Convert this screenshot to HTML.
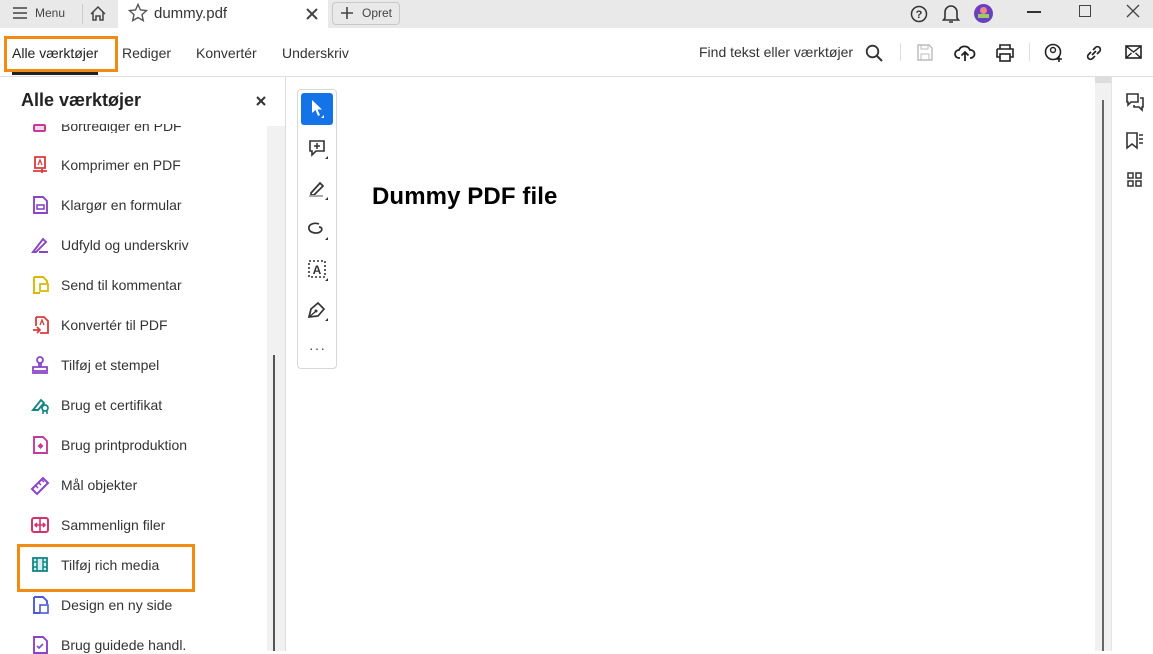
<!DOCTYPE html>
<html><head><meta charset="utf-8"><style>
*{margin:0;padding:0;box-sizing:border-box}
body{width:1153px;height:651px;overflow:hidden;background:#fff;font-family:"Liberation Sans",Arial,sans-serif;color:#2c2c2c;position:relative}
.a{position:absolute}
.tb{left:0;top:0;width:1153px;height:28px;background:#e9e9e9}
.t{font-size:14px;white-space:nowrap}
svg{position:absolute;overflow:visible}
.it{position:absolute;left:61px;font-size:14px;color:#333;white-space:nowrap}
</style></head><body>
<div class="a tb"></div>
<svg style="left:12px;top:6px" width="16" height="14"><path d="M1 2h14M1 7h14M1 12h14" stroke="#444" stroke-width="1.6"/></svg>
<div class="a t" style="left:35px;top:6px;font-size:12px;color:#444">Menu</div>
<div class="a" style="left:82px;top:4px;width:1px;height:20px;background:#ccc"></div>
<svg style="left:89px;top:5px" width="18" height="17"><path d="M2 9L9 2l7 7M4 7v8h3v-4h4v4h3V7" fill="none" stroke="#444" stroke-width="1.5"/></svg>
<div class="a" style="left:118px;top:0;width:210px;height:28px;background:#fff"></div>
<svg style="left:128px;top:3px" width="20" height="20"><path d="M10 1.5l2.5 5.5 6 .6-4.5 4 1.3 6L10 14.6 4.7 17.6 6 11.6 1.5 7.6l6-.6z" fill="none" stroke="#555" stroke-width="1.4"/></svg>
<div class="a t" style="left:154px;top:5px;font-size:15px;color:#333">dummy.pdf</div>
<svg style="left:306px;top:8px" width="12" height="12"><path d="M1 1l10 10M11 1L1 11" stroke="#444" stroke-width="2"/></svg>
<div class="a" style="left:332px;top:2px;width:68px;height:23px;border:1px solid #c8c8c8;border-radius:4px"></div>
<svg style="left:341px;top:7px" width="12" height="12"><path d="M6 0v12M0 6h12" stroke="#444" stroke-width="1.6"/></svg>
<div class="a t" style="left:362px;top:6px;font-size:12px;color:#444">Opret</div>
<svg style="left:910px;top:5px" width="18" height="18"><circle cx="9" cy="9" r="7.5" fill="none" stroke="#333" stroke-width="1.5"/><text x="9" y="13" font-size="11" text-anchor="middle" font-family="Liberation Sans" font-weight="bold" fill="#333">?</text></svg>
<svg style="left:942px;top:4px" width="18" height="20"><path d="M3 14V8a6 6 0 0 1 12 0v6l1.5 2H1.5zM7 18h4" fill="none" stroke="#333" stroke-width="1.6"/></svg>
<div class="a" style="left:974px;top:4px;width:19px;height:19px;border-radius:50%;background:#6a3fc0"></div>
<div class="a" style="left:980px;top:7px;width:7px;height:7px;border-radius:50%;background:#e88"></div>
<div class="a" style="left:978px;top:14px;width:11px;height:4px;background:#9c6"></div>
<div class="a" style="left:1027px;top:11px;width:14px;height:2px;background:#333"></div>
<div class="a" style="left:1079px;top:5px;width:12px;height:12px;border:1px solid #444"></div>
<svg style="left:1127px;top:5px" width="12" height="12"><path d="M0 0l12 12M12 0L0 12" stroke="#444" stroke-width="1.3"/></svg>
<div class="a t" style="left:12px;top:45px;color:#222">Alle værktøjer</div>
<div class="a" style="left:4px;top:36px;width:114px;height:36px;border:3px solid #f38a12"></div>
<div class="a" style="left:12px;top:72px;width:86px;height:3px;background:#222"></div>
<div class="a t" style="left:122px;top:45px;color:#333">Rediger</div>
<div class="a t" style="left:196px;top:45px;color:#333">Konvertér</div>
<div class="a t" style="left:282px;top:45px;color:#333">Underskriv</div>
<div class="a t" style="left:699px;top:44px;color:#333">Find tekst eller værktøjer</div>
<svg style="left:865px;top:44px" width="18" height="18"><circle cx="7.5" cy="7.5" r="5.8" fill="none" stroke="#333" stroke-width="1.8"/><path d="M12 12l5 5" stroke="#333" stroke-width="2"/></svg>
<div class="a" style="left:900px;top:43px;width:1px;height:18px;background:#ddd"></div>
<svg style="left:917px;top:44px" width="16" height="17"><path d="M1 1h11l3 3v12H1z" fill="none" stroke="#bbb" stroke-width="1.4"/><rect x="4" y="1" width="7" height="4" fill="none" stroke="#bbb"/><rect x="4" y="10" width="8" height="6" fill="none" stroke="#bbb"/></svg>
<svg style="left:955px;top:43px" width="20" height="20"><path d="M5 15H4a4 4 0 0 1 0-8 6 6 0 0 1 11 0 4 4 0 0 1 1 8h-1M10 18V9M6.5 12.5L10 9l3.5 3.5" fill="none" stroke="#222" stroke-width="1.8"/></svg>
<svg style="left:995px;top:44px" width="20" height="18"><path d="M5 5V1h10v4M2 5h16v8h-3M5 13H2V5" fill="none" stroke="#222" stroke-width="1.6"/><rect x="5" y="10" width="10" height="7" fill="none" stroke="#222" stroke-width="1.6"/></svg>
<div class="a" style="left:1029px;top:43px;width:1px;height:18px;background:#ddd"></div>
<svg style="left:1044px;top:43px" width="20" height="20"><circle cx="9" cy="9" r="7.5" fill="none" stroke="#222" stroke-width="1.6"/><circle cx="9" cy="7" r="2.5" fill="none" stroke="#222" stroke-width="1.4"/><path d="M15 13v6M12 16h6" stroke="#222" stroke-width="1.6"/></svg>
<svg style="left:1085px;top:44px" width="18" height="18"><path d="M7 11l4-4M6 8L3.5 10.5a2.8 2.8 0 0 0 4 4L10 12M12 10l2.5-2.5a2.8 2.8 0 0 0-4-4L8 6" fill="none" stroke="#222" stroke-width="1.7"/></svg>
<svg style="left:1125px;top:45px" width="17" height="14"><rect x="1" y="1" width="15" height="12" fill="none" stroke="#222" stroke-width="1.6"/><path d="M1 1l7.5 6L16 1M1 13l5.5-5M16 13l-5.5-5" fill="none" stroke="#222" stroke-width="1.4"/></svg>
<div class="a" style="left:0;top:76px;width:1153px;height:1px;background:#ddd"></div>
<div class="a" style="left:21px;top:90px;font-size:18px;font-weight:bold;color:#222">Alle værktøjer</div>
<svg style="left:256px;top:96px" width="10" height="10"><path d="M1 1l8 8M9 1L1 9" stroke="#333" stroke-width="2"/></svg>
<div class="a" style="left:267px;top:126px;width:18px;height:525px;background:#f1f1f1"></div>
<div class="a" style="left:273px;top:355px;width:2px;height:296px;background:#555"></div>
<div class="a" style="left:285px;top:77px;width:1px;height:574px;background:#ddd"></div>
<div class="a" style="left:0;top:124px;width:266px;height:9px;overflow:hidden"><div class="it" style="top:-6px">Bortrediger en PDF</div><div class="a" style="left:33px;top:0px;width:13px;height:8px;border:2px solid #c43a9a;border-radius:2px;background:#f5d8ea"></div></div>
<div class="it" style="top:157px">Komprimer en PDF</div>
<div class="it" style="top:197px">Klargør en formular</div>
<div class="it" style="top:237px">Udfyld og underskriv</div>
<div class="it" style="top:277px">Send til kommentar</div>
<div class="it" style="top:317px">Konvertér til PDF</div>
<div class="it" style="top:357px">Tilføj et stempel</div>
<div class="it" style="top:397px">Brug et certifikat</div>
<div class="it" style="top:437px">Brug printproduktion</div>
<div class="it" style="top:477px">Mål objekter</div>
<div class="it" style="top:517px">Sammenlign filer</div>
<div class="it" style="top:557px">Tilføj rich media</div>
<div class="it" style="top:597px">Design en ny side</div>
<div class="it" style="top:637px">Brug guidede handl.</div>
<div class="a" style="left:17px;top:544px;width:178px;height:48px;border:3px solid #f38a12"></div>
<svg style="left:32px;top:156px" width="16" height="18"><path d="M3 1h10v11H3z" fill="none" stroke="#d93b3b" stroke-width="1.8"/><path d="M1 15h14M10 13v4" stroke="#d93b3b" stroke-width="1.8"/><path d="M6 9l2-5 2 5" fill="none" stroke="#d93b3b" stroke-width="1.3"/></svg>
<svg style="left:33px;top:196px" width="15" height="18"><path d="M1 1h9l4 4v12H1z" fill="none" stroke="#8a44c8" stroke-width="1.9"/><rect x="4" y="9" width="7" height="4" fill="none" stroke="#8a44c8" stroke-width="1.6"/></svg>
<svg style="left:31px;top:236px" width="18" height="18"><path d="M2 16L12 3l3 3L5 16H2zM8 16h9" fill="none" stroke="#8a44c8" stroke-width="1.9"/></svg>
<svg style="left:33px;top:276px" width="16" height="18"><path d="M1 1h9l4 4v2M1 1v16h6" fill="none" stroke="#d6b800" stroke-width="1.9"/><rect x="7" y="8" width="8" height="7" fill="none" stroke="#d6b800" stroke-width="1.7"/></svg>
<svg style="left:32px;top:316px" width="17" height="18"><path d="M4 1h8l4 4v12H8M4 1v9" fill="none" stroke="#d93b3b" stroke-width="1.8"/><path d="M1 14h6M5 11l3 3-3 3" fill="none" stroke="#d93b3b" stroke-width="1.7"/><path d="M8 9l2-5 2 5" fill="none" stroke="#d93b3b" stroke-width="1.3"/></svg>
<svg style="left:31px;top:356px" width="18" height="18"><circle cx="9" cy="4" r="3" fill="none" stroke="#8a44c8" stroke-width="1.8"/><path d="M8 7v4M10 7v4M2 11h14v4H2zM1 17h16" fill="none" stroke="#8a44c8" stroke-width="1.8"/></svg>
<svg style="left:31px;top:396px" width="18" height="18"><path d="M2 14L10 4l3 3-6 7H2z" fill="none" stroke="#138585" stroke-width="1.9"/><circle cx="14" cy="12" r="3" fill="none" stroke="#138585" stroke-width="1.7"/><path d="M12 15v3M16 15v3" stroke="#138585" stroke-width="1.6"/></svg>
<svg style="left:33px;top:436px" width="15" height="18"><path d="M1 1h9l4 4v12H1z" fill="none" stroke="#c43a9a" stroke-width="1.9"/><path d="M7.5 7l3 3-3 3-3-3z" fill="#c43a9a"/></svg>
<svg style="left:31px;top:476px" width="18" height="18"><path d="M1 13L12 2l5 5L6 18z" fill="none" stroke="#8a44c8" stroke-width="2"/><path d="M5 10l2 2M8 7l2 2M11 4l2 2" stroke="#8a44c8" stroke-width="1.5"/></svg>
<svg style="left:31px;top:516px" width="18" height="18"><rect x="1" y="2" width="16" height="14" rx="2" fill="none" stroke="#d6316d" stroke-width="2"/><path d="M9 2v14M4 9h10M6 7l-2 2 2 2M12 7l2 2-2 2" fill="none" stroke="#d6316d" stroke-width="1.6"/></svg>
<svg style="left:32px;top:557px" width="16" height="15"><rect x="1" y="1" width="14" height="13" fill="#d6eeee" stroke="#138585" stroke-width="1.8"/><path d="M5 1v13M11 1v13M1 5h4M1 10h4M11 5h4M11 10h4" stroke="#138585" stroke-width="1.5"/></svg>
<svg style="left:33px;top:596px" width="16" height="18"><path d="M1 1h9l4 4v3M1 1v16h6" fill="none" stroke="#4a5ad8" stroke-width="1.9"/><rect x="7" y="9" width="8" height="8" fill="none" stroke="#4a5ad8" stroke-width="1.6"/></svg>
<svg style="left:33px;top:636px" width="15" height="18"><path d="M1 1h9l4 4v12H1z" fill="none" stroke="#8a44c8" stroke-width="1.9"/><path d="M4 10l2 2 4-4" fill="none" stroke="#8a44c8" stroke-width="1.6"/></svg>
<div class="a" style="left:297px;top:89px;width:40px;height:280px;border:1px solid #d8d8d8;border-radius:4px"></div>
<div class="a" style="left:301px;top:93px;width:32px;height:32px;background:#1473e6;border-radius:3px"></div>
<svg style="left:310px;top:99px" width="16" height="20"><path d="M2 1v13l3.5-3 2.5 6 2-1-2.5-5.5H12z" fill="#fff"/><path d="M14 16v3h-3z" fill="#fff"/></svg>
<svg style="left:309px;top:140px" width="20" height="20"><path d="M1 1h14v10H7l-4 4v-4H1z" fill="none" stroke="#333" stroke-width="1.6"/><path d="M8 3v6M5 6h6" stroke="#333" stroke-width="1.5"/><path d="M19 16v3h-3z" fill="#333"/></svg>
<svg style="left:308px;top:179px" width="21" height="21"><path d="M3 14L12 4l3 3-9 9H3z" fill="none" stroke="#333" stroke-width="1.7"/><path d="M1 17h14" stroke="#aaa" stroke-width="2"/><path d="M20 18v3h-3z" fill="#333"/></svg>
<svg style="left:307px;top:220px" width="22" height="20"><path d="M12 4C6 2 1 5 2 9s8 5 11 3 2-5-1-5" fill="none" stroke="#333" stroke-width="1.7"/><path d="M21 17v3h-3z" fill="#333"/></svg>
<svg style="left:308px;top:260px" width="21" height="21"><rect x="1" y="1" width="16" height="16" fill="none" stroke="#333" stroke-width="1.6" stroke-dasharray="2 2"/><text x="9" y="14" font-size="12" text-anchor="middle" font-family="Liberation Sans" font-weight="bold" fill="#333">A</text><path d="M20 18v3h-3z" fill="#333"/></svg>
<svg style="left:307px;top:299px" width="22" height="22"><path d="M2 18l2-8 7-6 6 6-6 7z" fill="none" stroke="#333" stroke-width="1.7"/><circle cx="9" cy="12" r="1.5" fill="#333"/><path d="M2 18l6-5" stroke="#333" stroke-width="1.3"/><path d="M21 19v3h-3z" fill="#333"/></svg>
<div class="a" style="left:309px;top:340px;font-size:14px;color:#444;letter-spacing:1px">···</div>
<div class="a" style="left:372px;top:183px;font-size:24px;font-weight:bold;color:#000;letter-spacing:0.1px">Dummy PDF file</div>
<div class="a" style="left:1095px;top:77px;width:16px;height:574px;background:#f1f1f1"></div>
<div class="a" style="left:1095px;top:77px;width:16px;height:6px;background:#ddd"></div>
<div class="a" style="left:1102px;top:100px;width:2px;height:551px;background:#666"></div>
<div class="a" style="left:1111px;top:77px;width:1px;height:574px;background:#e4e4e4"></div>
<svg style="left:1126px;top:93px" width="18" height="18"><path d="M1 1h11v8H5l-3 3V9H1z" fill="none" stroke="#333" stroke-width="1.6"/><path d="M14 5h3v9h-1v3l-3-3H8v-2" fill="none" stroke="#333" stroke-width="1.6"/></svg>
<svg style="left:1126px;top:132px" width="18" height="18"><path d="M1 1h10v15l-5-4-5 4z" fill="none" stroke="#333" stroke-width="1.6"/><path d="M13 3h4M13 7h4M13 11h4" stroke="#333" stroke-width="1.4"/></svg>
<svg style="left:1127px;top:172px" width="16" height="16"><rect x="1" y="1" width="5" height="5" fill="none" stroke="#333" stroke-width="1.5"/><rect x="9" y="1" width="5" height="5" fill="none" stroke="#333" stroke-width="1.5"/><rect x="1" y="9" width="5" height="5" fill="none" stroke="#333" stroke-width="1.5"/><rect x="9" y="9" width="5" height="5" fill="none" stroke="#333" stroke-width="1.5"/></svg>
</body></html>
